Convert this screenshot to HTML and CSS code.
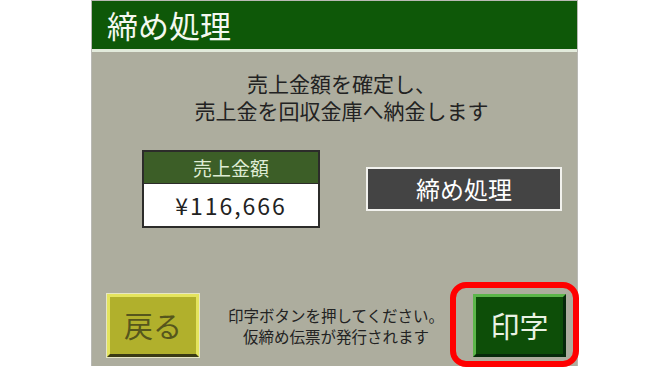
FILE: index.html
```html
<!DOCTYPE html>
<html lang="ja">
<head>
<meta charset="utf-8">
<title>締め処理</title>
<link rel="stylesheet" href="styles.css">
</head>
<body>
<div class="panel">
  <div class="header"><span class="title">締め処理</span></div>
  <div class="content">
    <div class="message">
      <span class="message-line">売上金額を確定し、</span>
      <span class="message-line">売上金を回収金庫へ納金します</span>
    </div>
    <div class="middle">
      <div class="amount">
        <div class="amount-label">売上金額</div>
        <div class="amount-value">¥116,666</div>
      </div>
      <button class="btn-close">締め処理</button>
    </div>
    <div class="bottom">
      <button class="btn-back">戻る</button>
      <p class="hint">印字ボタンを押してください。<br>仮締め伝票が発行されます</p>
      <button class="btn-print">印字</button>
    </div>
  </div>
  <div class="highlight"></div>
</div>
</body>
</html>
```
FILE: styles.css
```css
html, body {
  margin: 0;
  padding: 0;
  background: #ffffff;
}
body {
  font-family: "Noto Sans CJK JP", "Noto Sans", sans-serif;
  width: 670px;
  height: 367px;
  overflow: hidden;
}
.panel {
  position: relative;
  box-sizing: border-box;
  margin-left: 91px;
  width: 487px;
  height: 366px;
  border: 1px solid #b9b9b4;
  border-bottom: none;
  background: #adad9e;
  display: flex;
  flex-direction: column;
}
.header {
  height: 48px;
  background: #0e5808;
  border-bottom: 3px solid #e2eadb;
  display: flex;
  align-items: center;
  padding-left: 15px;
}
.title {
  color: #f4f8f0;
  font-size: 31px;
  line-height: 1;
  position: relative;
  top: -1px;
}
.content {
  flex: 1;
  display: flex;
  flex-direction: column;
  padding-top: 19px;
}
.message {
  display: flex;
  flex-direction: column;
  align-items: center;
  gap: 3px;
  padding-left: 14px;
  font-size: 21px;
  line-height: 24px;
  color: #222222;
}
.message-line {
  display: block;
}
.middle {
  margin-top: 28px;
  display: flex;
  align-items: center;
  gap: 46px;
  padding-left: 50px;
}
.amount {
  box-sizing: border-box;
  width: 178px;
  border: 2px solid #2c2c2a;
  background: #ffffff;
}
.amount-label {
  height: 31px;
  line-height: 31px;
  background: #3c5e27;
  color: #dfecd4;
  font-size: 19px;
  text-align: center;
  border-bottom: 1px solid #2c2c2a;
}
.amount-value {
  height: 42px;
  line-height: 42px;
  font-size: 23px;
  color: #222222;
  text-align: center;
  letter-spacing: 2px;
}
.btn-close {
  box-sizing: border-box;
  width: 196px;
  height: 44px;
  padding: 0;
  border: 2px solid #f2f2ee;
  background: #444444;
  color: #ffffff;
  font-family: inherit;
  font-size: 24px;
  line-height: 1;
}
.bottom {
  margin-top: auto;
  display: flex;
  align-items: center;
  padding: 0 11px 9px 15px;
}
.btn-back {
  box-sizing: border-box;
  width: 92px;
  height: 63px;
  padding: 0;
  background: #b1b02c;
  border: 3px solid #e4e45e;
  border-bottom-color: #3a3a14;
  box-shadow: 0 0 0 1px #e6e6c4;
  color: #56561c;
  font-family: inherit;
  font-size: 29px;
  line-height: 1;
}
.hint {
  flex: 1;
  margin: 0;
  text-align: center;
  font-size: 15.5px;
  line-height: 21px;
  color: #222222;
}
.btn-print {
  box-sizing: border-box;
  width: 93px;
  height: 63px;
  padding: 0;
  background: #0d4e08;
  border: 3px solid #5cb64a;
  border-right-color: #06290a;
  border-bottom-color: #06290a;
  color: #eaf2e4;
  font-family: inherit;
  font-size: 29px;
  line-height: 1;
}
.highlight {
  position: absolute;
  left: 358px;
  top: 281px;
  box-sizing: border-box;
  width: 129px;
  height: 85px;
  border: 6px solid #ff0000;
  border-radius: 16px;
  pointer-events: none;
}
```
